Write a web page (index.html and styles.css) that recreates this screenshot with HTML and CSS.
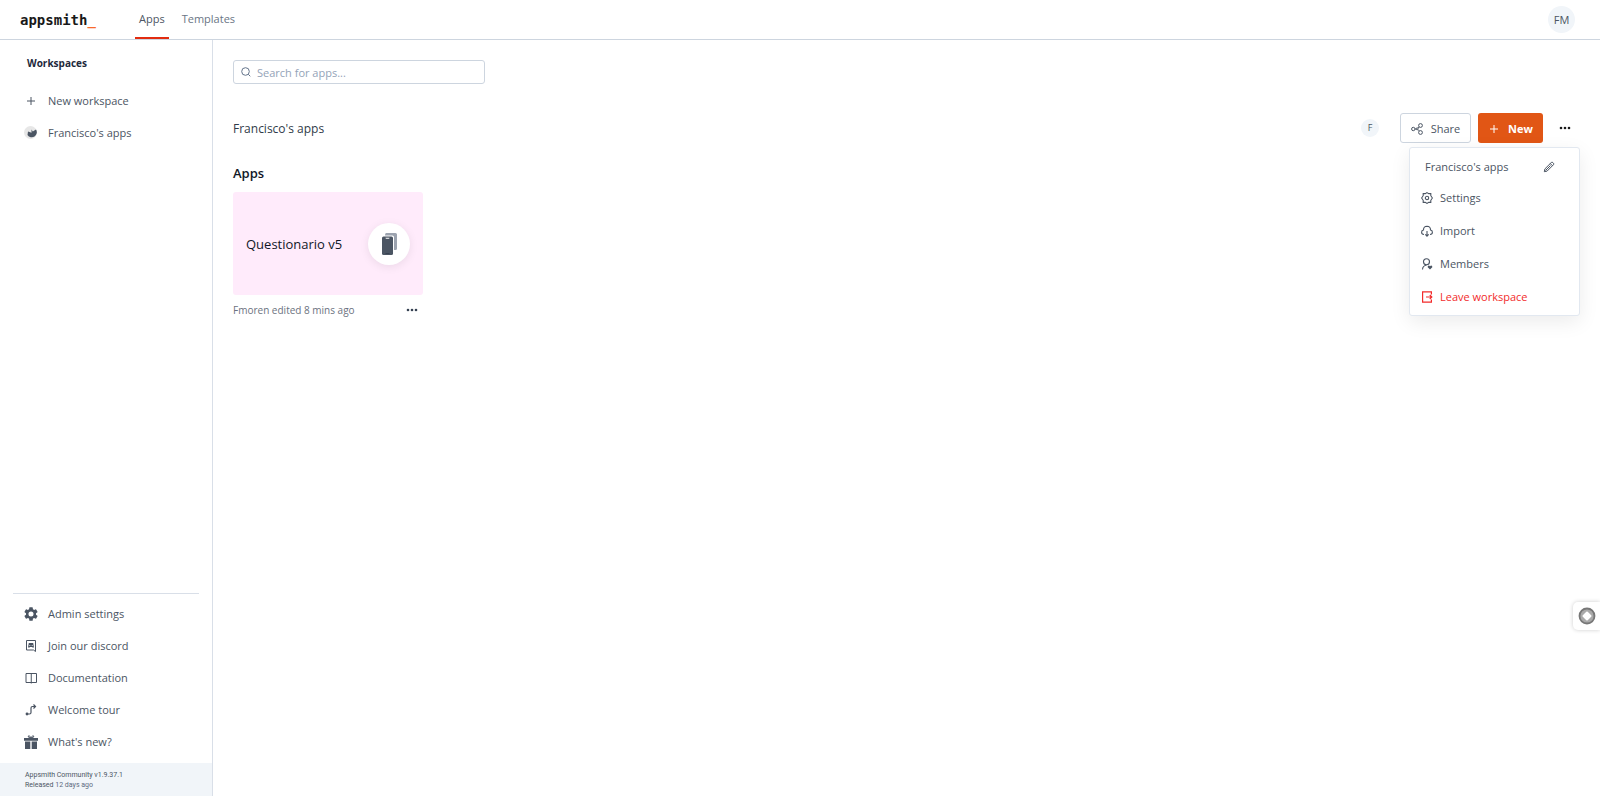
FILE: index.html
```html
<!DOCTYPE html>
<html lang="en">

<head>
    <meta charset="UTF-8">
    <meta name="viewport" content="width=device-width, initial-scale=1.0">
    <title>Applications | Appsmith</title>
    <link rel="stylesheet" href="styles.css">
</head>

<body>
    <header class="header">
        <a href="#" class="logo">appsmith<span>_</span></a>
        <nav class="tabs">
            <a href="#" class="tab active">Apps</a>
            <a href="#" class="tab">Templates</a>
        </nav>
        <button class="profile">FM</button>
    </header>

    <div class="page">
        <aside class="sidebar">
            <h2>Workspaces</h2>
            <nav class="side-list">
                <a href="#" class="side-item">
                    <svg width="14" height="14" viewBox="0 0 14 14" fill="none" stroke="currentColor"><path d="M7 3v8M3 7h8"/></svg>
                    New workspace
                </a>
                <a href="#" class="side-item">
                    <svg width="14" height="14" viewBox="0 0 14 14"><circle cx="6.500" cy="6.500" r="6.500" fill="#e7e7e7"/><path d="M4 5.500l3.500 1.300V3.500l1.300 2L12 3.500A5 5 0 1 1 3.500 9z" fill="currentColor"/></svg>
                    Francisco's apps
                </a>
            </nav>

            <nav class="side-list side-bottom">
                <a href="#" class="side-item">
                    <svg width="14" height="14" viewBox="2 2 20 20" fill="currentColor"><path d="M19.140 12.940a7 7 0 0 0 0-1.880l2.030-1.580a.5.5 0 0 0 .12-.61l-1.920-3.320a.5.5 0 0 0-.59-.22l-2.390.96a7 7 0 0 0-1.620-.94l-.36-2.540a.5.5 0 0 0-.48-.41h-3.840a.5.5 0 0 0-.47.41l-.36 2.540a7 7 0 0 0-1.620.94l-2.390-.96a.5.5 0 0 0-.59.22L2.740 8.870a.5.5 0 0 0 .12.61l2.030 1.580a7 7 0 0 0 0 1.880l-2.030 1.580a.5.5 0 0 0-.12.61l1.920 3.320c.12.220.37.290.59.220l2.390-.96c.5.380 1.030.7 1.620.94l.36 2.540c.05.240.24.410.48.410h3.840c.24 0 .44-.17.470-.41l.36-2.540a7 7 0 0 0 1.620-.94l2.390.96c.22.080.47 0 .59-.22l1.920-3.320a.5.5 0 0 0-.12-.61zM12 15.600a3.600 3.600 0 1 1 0-7.200 3.600 3.600 0 0 1 0 7.200z"/></svg>
                    Admin settings
                </a>
                <a href="#" class="side-item">
                    <svg width="14" height="14" viewBox="0 0 14 14" fill="none" stroke="currentColor"><path d="M2.500 1.500h9v11l-2-1.500h-7z"/><path d="M4.800 4h4.400L10 8.500H8.500L8 8H6l-.5.500H4z" fill="currentColor" stroke="none"/><path d="M5.300 6.500h1M7.700 6.500h1" stroke="#fff" stroke-width=".8"/></svg>
                    Join our discord
                </a>
                <a href="#" class="side-item">
                    <svg width="14" height="14" viewBox="0 0 14 14" fill="none" stroke="currentColor"><path d="M2 2.500h10.500v9H2zM7.250 2.500v10"/></svg>
                    Documentation
                </a>
                <a href="#" class="side-item">
                    <svg width="14" height="14" viewBox="0 0 14 14" fill="none" stroke="currentColor" stroke-width="1.200"><path d="M3 11h2.500q1.500 0 1.500-1.500V5q0-1.500 1.500-1.500H11M9.500 1.500l2 2-2 2"/><circle cx="3" cy="11" r="1.400" fill="currentColor" stroke="none"/></svg>
                    Welcome tour
                </a>
                <a href="#" class="side-item">
                    <svg width="14" height="14" viewBox="0 0 14 14" fill="currentColor"><path d="M0 3h14v2.800H0zM1 6.500h5.300V14H1zM7.700 6.500H13V14H7.700z"/><path d="M7 3Q3.500 2.500 4.200 1 5.500-.3 7 3 8.500-.3 9.800 1 10.500 2.500 7 3z" fill="none" stroke="currentColor" stroke-width=".9"/></svg>
                    What's new?
                </a>
            </nav>
            <footer class="version">
                <div>Appsmith Community v1.9.37.1</div>
                <div>Released <span>12 days ago</span></div>
            </footer>
        </aside>

        <main class="content">
            <label class="search">
                <svg width="10" height="10" viewBox="0 0 10 10" fill="none" stroke="#64748b"><circle cx="4.500" cy="4.500" r="3.800"/><path d="M7.300 7.300l2 2"/></svg>
                <input type="text" placeholder="Search for apps..." aria-label="Search for apps">
            </label>

            <section class="workspace">
                <div class="workspace-head">
                    <h1>Francisco's apps</h1>
                    <span class="member">F</span>
                    <button class="btn share">
                        <svg width="12" height="12" viewBox="0 0 12 12" fill="none" stroke="currentColor"><circle cx="2.300" cy="6" r="1.700"/><circle cx="6.200" cy="5.800" r="1"/><circle cx="9.500" cy="2.500" r="1.900"/><circle cx="9.500" cy="9.500" r="1.900"/><path d="M4 6h1.200M7 5.200l1.200-1.300M7 6.600l1.200 1.300"/></svg>
                        Share
                    </button>
                    <button class="btn new">
                        <svg width="12" height="12" viewBox="0 0 12 12" fill="none" stroke="currentColor"><path d="M6 2v8M2 6h8"/></svg>
                        New
                    </button>
                    <div class="more">
                        <button class="dots" aria-label="Workspace options">
                            <svg width="12" height="4" viewBox="0 0 12 4" fill="#191919"><circle cx="2" cy="2" r="1.300"/><circle cx="6" cy="2" r="1.300"/><circle cx="10" cy="2" r="1.300"/></svg>
                        </button>
                        <div class="menu">
                            <button class="menu-title">
                                Francisco's apps
                                <svg width="12" height="12" viewBox="0 0 12 12" fill="none" stroke="currentColor"><path d="M1.300 10.700l.6-2.800 6.400-6.400q.8-.6 1.600.1l.5.5q.7.800.1 1.600L4.100 10.100zM7.300 2.600l2.100 2.100M2.500 9.500l5-5"/></svg>
                            </button>
                            <button class="menu-item">
                                <svg width="12" height="12" viewBox="0 0 12 12" fill="none" stroke="currentColor" stroke-width="1.100"><path d="M6 .6l1.700 1H9.800v2.100L11.400 6 9.800 8.300v2.100H7.700L6 11.400l-1.700-1H2.200V8.300L.6 6l1.600-2.300V1.600h2.100z"/><circle cx="6" cy="6" r="1.700"/></svg>
                                Settings
                            </button>
                            <button class="menu-item">
                                <svg width="12" height="12" viewBox="0 0 12 12" fill="none" stroke="currentColor" stroke-width="1.100"><path d="M3 9.500Q.6 9.300.6 7.200.6 5.300 2.500 5 2.400 1.500 6 1.300q3.600.2 3.500 3.700 1.900.3 1.900 2.200 0 2.100-2.400 2.300M6 6v5M4.300 9.400L6 11.100l1.700-1.700"/></svg>
                                Import
                            </button>
                            <button class="menu-item">
                                <svg width="12" height="12" viewBox="0 0 12 12" fill="none" stroke="currentColor" stroke-width="1.100"><circle cx="5.500" cy="3.700" r="3"/><path d="M1.500 11.500Q1.700 7.500 5.500 7.200"/><path d="M9 11.500L6.700 9.300Q6.500 7.500 8 7.600L9 8.200l1-.6q1.500-.1 1.300 1.700z" fill="currentColor" stroke="none"/></svg>
                                Members
                            </button>
                            <button class="menu-item leave">
                                <svg width="12" height="12" viewBox="0 0 12 12" fill="none" stroke="currentColor" stroke-width="1.200"><path d="M10.400 3.500V.8H1.600v10.400h8.800V8.500M5 6h5.500M8.800 4l2 2-2 2"/></svg>
                                Leave workspace
                            </button>
                        </div>
                    </div>
                </div>

                <h3>Apps</h3>
                <article class="app">
                    <a href="#" class="app-card">
                        <span class="app-name">Questionario v5</span>
                        <span class="app-icon">
                            <svg width="18" height="24" viewBox="0 0 18 24"><path d="M6 1h9.500Q17 1 17 2.500v14q0 1.500-1.500 1.500H14V5q0-1.500-1.500-1.500H5Q5 1 6 1z" fill="#9ca3af"/><rect x="2" y="4.500" width="11" height="18.500" rx="1.500" fill="#4b5563"/><path d="M5.500 5.800q0 .9.800.9h2.400q.8 0 .8-.9" fill="#fff"/><path d="M5.500 21.500h4" stroke="#374151"/></svg>
                        </span>
                    </a>
                    <div class="app-foot">
                        <span>Fmoren edited 8 mins ago</span>
                        <button class="dots" aria-label="App options">
                            <svg width="12" height="4" viewBox="0 0 12 4" fill="#364252"><circle cx="2" cy="2" r="1.300"/><circle cx="6" cy="2" r="1.300"/><circle cx="10" cy="2" r="1.300"/></svg>
                        </button>
                    </div>
                </article>
            </section>
        </main>
    </div>

    <button class="widget" aria-label="Open widget">
        <svg width="18" height="18" viewBox="0 0 18 18"><circle cx="9" cy="9" r="7.500" fill="#aaa" stroke="#777" stroke-width="1.800"/><path d="M9 5.500L12.500 9 9 12.500 5.500 9z" fill="#fff" stroke="#fff" stroke-linejoin="round" stroke-width="2"/></svg>
    </button>
</body>

</html>
```

FILE: styles.css
```css
* {
    box-sizing: border-box;
}

body {
    margin: 0;
    height: 100vh;
    display: flex;
    flex-direction: column;
    font-family: "Open Sans", "Noto Sans", sans-serif;
    font-size: 11px;
    line-height: 16px;
    color: #4b5563;
    background-color: #fff;
}

h1,
h2,
h3 {
    margin: 0;
}

a {
    color: inherit;
    text-decoration: none;
}

button,
input {
    font: inherit;
    color: inherit;
    padding: 0;
    border: none;
    background: none;
}

button {
    cursor: pointer;
}

svg {
    flex-shrink: 0;
}

/* header */
.header {
    display: flex;
    align-items: center;
    height: 40px;
    padding: 0 25px 0 20px;
    border-bottom: 1px solid #cdd5df;
}

.logo {
    width: 115px;
    font-family: "DejaVu Sans Mono", monospace;
    font-size: 14px;
    font-weight: bold;
    color: #191919;
}

.logo span {
    color: #f86a2b;
}

.tabs {
    display: flex;
    align-self: stretch;
    gap: 9px;
}

.tab {
    padding: 11px 4px 0;
    color: #6a7585;
}

.tab.active {
    border-bottom: 2px solid #e22c10;
    color: #4c5664;
}

.profile {
    width: 27px;
    height: 27px;
    margin-left: auto;
    border-radius: 50%;
    background-color: #f1f5f9;
}

.page {
    display: flex;
    flex: 1;
    min-height: 0;
}

/* sidebar */
.sidebar {
    display: flex;
    flex-direction: column;
    width: 213px;
    border-right: 1px solid #d9dfe8;
}

.sidebar h2 {
    padding: 15px 27px 14px;
    font-size: 10px;
    line-height: 16px;
    color: #1e293b;
}

.side-list {
    display: flex;
    flex-direction: column;
}

.side-item {
    display: flex;
    align-items: center;
    gap: 10px;
    height: 32px;
    padding-left: 24px;
}

.side-bottom {
    margin: auto 13px 0;
    padding: 4px 0 5px;
    border-top: 1px solid #d9dfe8;
}

.side-bottom .side-item {
    padding-left: 11px;
}

.version {
    height: 33px;
    padding: 7px 25px 6px;
    background-color: #f1f5f9;
    font-family: Roboto, sans-serif;
    font-size: 7px;
    line-height: 10px;
}

.version span {
    color: #5d6b7f;
}

/* content */
.content {
    flex: 1;
    padding: 20px 20px 0;
}

.search {
    display: flex;
    align-items: center;
    gap: 6px;
    width: 252px;
    height: 24px;
    padding: 0 7px;
    border: 1px solid #cdd5df;
    border-radius: 3px;
}

.search input {
    flex: 1;
    min-width: 0;
    padding-top: 1px;
    outline: none;
}

.search input::placeholder {
    color: #94a3b8;
}

.workspace {
    padding-top: 29px;
}

.workspace-head {
    display: flex;
    align-items: center;
}

.workspace-head h1 {
    margin-right: auto;
    padding-top: 2px;
    font-size: 12px;
    font-weight: normal;
    color: #303b49;
}

.member {
    width: 18px;
    height: 18px;
    margin-right: 21px;
    border-radius: 50%;
    background-color: #f1f5f9;
    font-size: 9px;
    line-height: 18px;
    text-align: center;
}

.btn {
    display: flex;
    align-items: center;
    justify-content: center;
    gap: 8px;
    height: 30px;
    padding-top: 1px;
    border-radius: 3px;
}

.share {
    width: 71px;
    margin-right: 7px;
    border: 1px solid #cdd5df;
    font-weight: 500;
}

.new {
    width: 65px;
    background-color: #e15615;
    color: #fff;
    font-weight: bold;
}

.more {
    position: relative;
    display: flex;
    width: 37px;
    justify-content: flex-end;
    padding-right: 9px;
}

.dots {
    display: flex;
    align-items: center;
    height: 16px;
}

.menu {
    position: absolute;
    top: 27px;
    right: 0;
    width: 171px;
    padding: 4px 0 2px;
    border: 1px solid #e2e8f0;
    border-radius: 3px;
    background-color: #fff;
    box-shadow: 0 6px 20px rgba(0, 0, 0, 0.08);
}

.menu-title,
.menu-item {
    display: flex;
    align-items: center;
    width: 100%;
    height: 33px;
}

.menu-title {
    justify-content: space-between;
    height: 29px;
    padding: 0 24px 0 15px;
}

.menu-item {
    gap: 7px;
    padding-left: 11px;
}

.leave {
    color: #f22b2b;
}

.workspace h3 {
    padding: 21px 0 10px;
    font-size: 13px;
    font-weight: 600;
    line-height: 18px;
    color: #111827;
}

/* app card */
.app {
    width: 190px;
}

.app-card {
    display: flex;
    align-items: center;
    justify-content: space-between;
    height: 103px;
    padding: 0 13px;
    border-radius: 3px;
    background-color: #ffebfb;
}

.app-name {
    font-size: 13px;
    color: #111827;
}

.app-icon {
    display: flex;
    align-items: center;
    justify-content: center;
    width: 42px;
    height: 42px;
    border-radius: 50%;
    background-color: #fff;
    box-shadow: 0 2px 10px rgba(0, 0, 0, 0.08);
}

.app-foot {
    display: flex;
    align-items: center;
    justify-content: space-between;
    padding: 7px 5px 0 0;
    font-size: 10px;
    color: #6b7280;
}

.widget {
    position: fixed;
    top: 602px;
    right: 0;
    display: flex;
    align-items: center;
    width: 27px;
    height: 28px;
    padding-left: 5px;
    border-radius: 5px 0 0 5px;
    background-color: #fff;
    box-shadow: 0 0 4px rgba(0, 0, 0, 0.2);
}
```
